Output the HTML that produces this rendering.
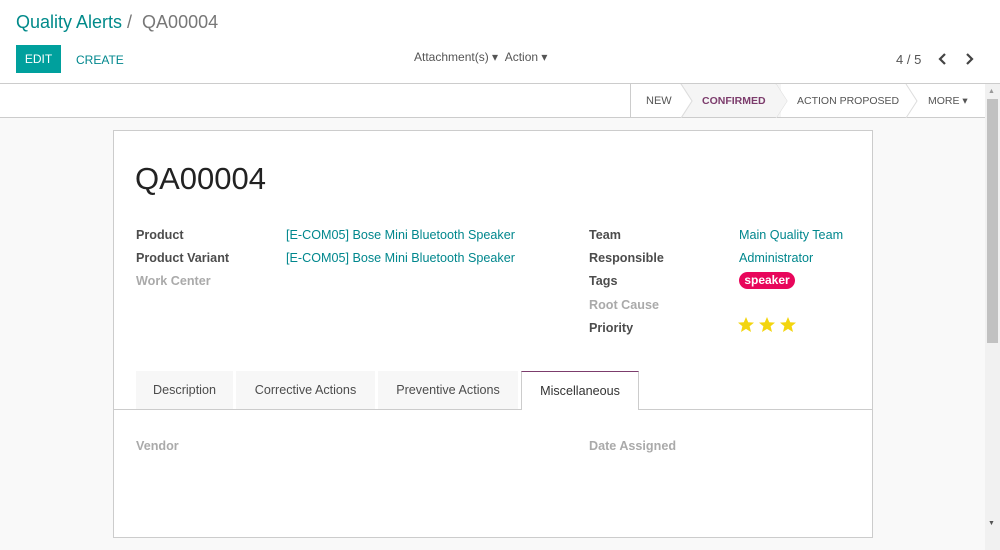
<!DOCTYPE html>
<html><head><style>
*{margin:0;padding:0;box-sizing:border-box}
body{width:1000px;height:550px;overflow:hidden;font-family:"Liberation Sans",sans-serif;font-size:12.6px;color:#4c4c4c;background:#f9f9f9;position:relative}
.abs{position:absolute}
.teal{color:#00878d}
.lbl{font-weight:bold;color:#4c4c4c}
.mut{font-weight:bold;color:#aaa}
</style></head><body>
<div class="abs" style="left:0;top:0;width:1000px;height:84px;background:#fff;border-bottom:1px solid #ccc"></div>
<div class="abs teal" style="left:16px;top:12px;font-size:18px;color:#018a8a">Quality Alerts <span style="color:#777">/ &nbsp;QA00004</span></div>
<div class="abs" style="left:16px;top:45px;width:45px;height:28px;background:#00a09d;color:#fff;font-size:12px;line-height:28px;text-align:center">EDIT</div>
<div class="abs" style="left:76px;top:53px;font-size:12px;color:#00878d">CREATE</div>
<div class="abs" style="left:414px;top:50px;font-size:12px;color:#555">Attachment(s) ▾ &nbsp;Action ▾</div>
<div class="abs" style="left:896px;top:52px;font-size:13px;color:#555">4 / 5</div>
<svg class="abs" style="left:937px;top:52px" width="40" height="14"><path d="M8 2 L3 7 L8 12" stroke="#444" stroke-width="2.2" fill="none"/><path d="M30 2 L35 7 L30 12" stroke="#444" stroke-width="2.2" fill="none"/></svg>
<div class="abs" style="left:0;top:84px;width:985px;height:34px;background:#fff;border-bottom:1px solid #ccc"></div>
<div class="abs" style="left:630px;top:84px;width:1px;height:33px;background:#ccc"></div>
<div class="abs" style="left:681px;top:84px;width:100px;height:33px;background:#f5f5f5"></div>
<svg class="abs" style="left:630px;top:84px" width="355" height="34"><path d="M51 0 L62 17 L51 34 M146 0 L157 17 L146 34 M276 0 L287 17 L276 34" stroke="#ddd" fill="none"/><path d="M146 0 L157 17 L146 34 L146 0Z" fill="#f5f5f5"/><path d="M51 0 L62 17 L51 34" fill="#fff" stroke="#ddd"/></svg>
<div class="abs" style="left:646px;top:95px;font-size:11px;color:#555">NEW</div>
<div class="abs" style="left:702px;top:95px;font-size:10.5px;color:#7c3c6c;font-weight:bold">CONFIRMED</div>
<div class="abs" style="left:797px;top:95px;font-size:10.5px;color:#555">ACTION PROPOSED</div>
<div class="abs" style="left:928px;top:95px;font-size:10.5px;color:#555">MORE ▾</div>
<div class="abs" style="left:985px;top:84px;width:15px;height:466px;background:#f1f1f1"></div>
<div class="abs" style="left:987px;top:99px;width:11px;height:244px;background:#c1c1c1"></div>
<div class="abs" style="left:988px;top:88px;font-size:7px;color:#999">▲</div>
<div class="abs" style="left:988px;top:520px;font-size:7px;color:#555">▼</div>
<div class="abs" style="left:113px;top:130px;width:760px;height:408px;background:#fff;border:1px solid #ccc"></div>
<div class="abs" style="left:135px;top:161px;font-size:31px;color:#222">QA00004</div>
<div class="abs lbl" style="left:136px;top:228px">Product</div>
<div class="abs lbl" style="left:136px;top:251px">Product Variant</div>
<div class="abs mut" style="left:136px;top:274px">Work Center</div>
<div class="abs teal" style="left:286px;top:228px">[E-COM05] Bose Mini Bluetooth Speaker</div>
<div class="abs teal" style="left:286px;top:251px">[E-COM05] Bose Mini Bluetooth Speaker</div>
<div class="abs lbl" style="left:589px;top:228px">Team</div>
<div class="abs lbl" style="left:589px;top:251px">Responsible</div>
<div class="abs lbl" style="left:589px;top:274px">Tags</div>
<div class="abs mut" style="left:589px;top:298px">Root Cause</div>
<div class="abs lbl" style="left:589px;top:321px">Priority</div>
<div class="abs teal" style="left:739px;top:228px">Main Quality Team</div>
<div class="abs teal" style="left:739px;top:251px">Administrator</div>
<div class="abs" style="left:739px;top:272px;width:56px;height:17px;border-radius:9px;background:#e8065b;color:#fff;font-weight:bold;font-size:12px;line-height:17px;text-align:center">speaker</div>
<svg class="abs" style="left:737px;top:316px" width="62" height="18"><g fill="#f3d50f"><path id="s" d="M9 1 L11.2 6.3 L17 6.6 L12.6 10.3 L14 16 L9 12.9 L4 16 L5.4 10.3 L1 6.6 L6.8 6.3Z"/><use href="#s" x="21"/><use href="#s" x="42"/></g></svg>
<div class="abs" style="left:113px;top:409px;width:760px;height:1px;background:#ccc"></div>
<div class="abs" style="left:136px;top:371px;width:97px;height:38px;background:#f7f7f7;text-align:center;line-height:38px">Description</div>
<div class="abs" style="left:236px;top:371px;width:139px;height:38px;background:#f7f7f7;text-align:center;line-height:38px">Corrective Actions</div>
<div class="abs" style="left:378px;top:371px;width:140px;height:38px;background:#f7f7f7;text-align:center;line-height:38px">Preventive Actions</div>
<div class="abs" style="left:521px;top:371px;width:118px;height:39px;background:#fff;border:1px solid #ccc;border-top:1px solid #7c3c6c;border-bottom:none;text-align:center;line-height:38px;color:#333">Miscellaneous</div>
<div class="abs mut" style="left:136px;top:439px">Vendor</div>
<div class="abs mut" style="left:589px;top:439px">Date Assigned</div>
</body></html>
